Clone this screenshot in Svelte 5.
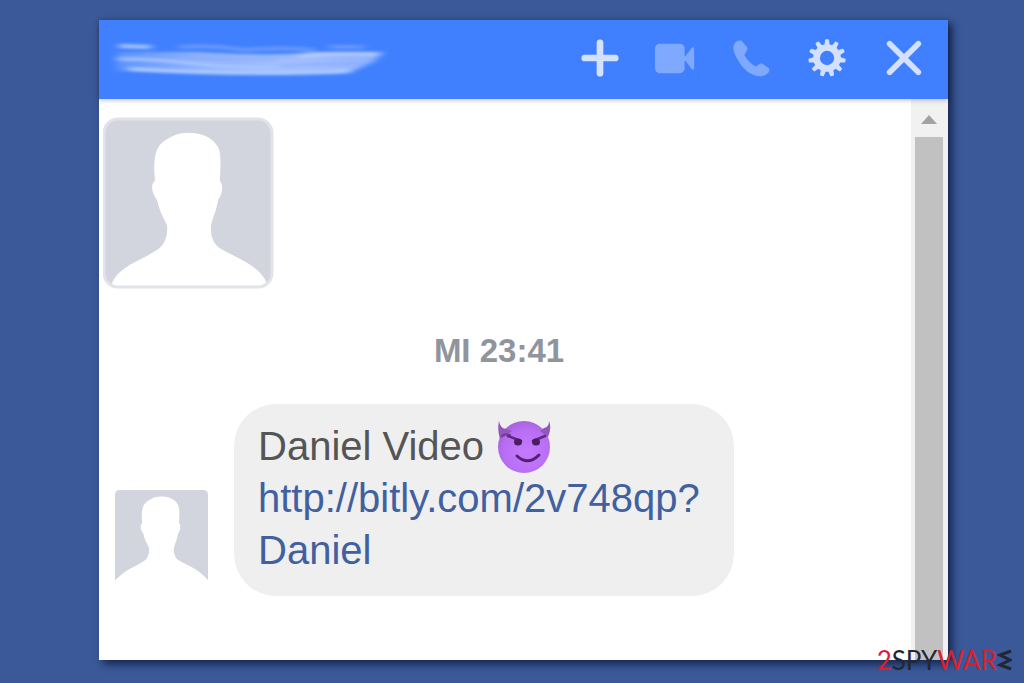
<script>
  const silhouette =
    'M8 170 C11 155 28 147 42 140 L54 133 C62 128 65 118 64 108 C59 99 56 92 54 83 C49 77 47 67 52 64 C51 56 51 46 52 40 C54 28 60 24 68 20 C80 13 106 14 115 30 C119 38 117 52 117 64 C121 69 119 78 115 83 C114 92 110 100 108 108 C107 118 110 127 118 132 C136 142 160 150 165 170 Z';
  const teeth = Array.from({ length: 11 }, (_, i) => (i * 360) / 11);
</script>

<svelte:head><title>Chat</title></svelte:head>

<main class="page">
  <section class="window" aria-label="Chat">
    <header class="bar">
      <svg class="name" viewBox="0 -2 284 44" preserveAspectRatio="none" aria-hidden="true">
        <defs>
          <filter id="smear" x="-5%" y="-20%" width="110%" height="140%">
            <feGaussianBlur stdDeviation="4 1.4" />
          </filter>
          <linearGradient id="stroke">
            <stop offset="0" stop-color="#8ab0ff" stop-opacity=".4" />
            <stop offset=".3" stop-color="#8db1ff" />
            <stop offset=".65" stop-color="#a3bfff" />
            <stop offset="1" stop-color="#8fb2ff" />
          </linearGradient>
        </defs>
        <g filter="url(#smear)" fill="none">
          <path d="M8 14 L90 14 Q170 19 205 14 L274 14 L264 24 L244 33 Q150 38 80 34 L8 33 Z" fill="url(#stroke)" />
          <path d="M10 8 L42 9" stroke="#a4c4ff" stroke-width="4" />
          <path d="M70 9 Q110 7 134 12 Q175 9 205 12 M220 9 H255" stroke="#6798ff" stroke-width="4" />
          <path d="M8 21 Q50 21 90 26 T170 29" stroke="#a9c6ff" stroke-width="3" />
          <path d="M20 31 Q90 35 150 35 T242 33" stroke="#accaff" stroke-width="4" />
          <path d="M170 21 Q215 14 270 16" stroke="#b9cdff" stroke-width="3" />
          <path d="M80 20 Q140 23 190 19 M170 28 Q220 25 256 26" stroke="#8aadfb" stroke-width="2" />
        </g>
      </svg>
      <nav class="tools" aria-label="Chat actions">
        <button aria-label="Add people">
          <svg viewBox="0 0 44 44"><path d="M22 6v32M6 22h32" stroke="#d3e1ff" stroke-width="7" stroke-linecap="round" /></svg>
        </button>
        <button aria-label="Video call">
          <svg viewBox="0 0 44 44" fill="#7ea9ff">
            <rect x="0" y="7" width="31" height="31" rx="5" />
            <path d="M32 20 L38 12 Q41 9 41 13 V32 Q41 36 38 33 L32 25 Z" />
            <path d="M30 20 H34 V25 H30 Z" />
          </svg>
        </button>
        <button aria-label="Voice call">
          <svg viewBox="0 0 44 44" fill="#7ea9ff">
            <path d="M3 8 C4 5 8 3 11 4 L17 11 C18 14 15 16 14 19 C17 24 21 28 26 31 C29 30 29 27 33 28 L40 33 C41 37 37 40 32 41 C23 42 14 35 9 27 C5 21 1 14 3 8 Z" />
          </svg>
        </button>
        <button aria-label="Settings">
          <svg viewBox="0 0 44 44">
            <circle cx="21" cy="22" r="11" fill="none" stroke="#d3e1ff" stroke-width="7" />
            {#each teeth as angle}
              <path d="M18.5 10 L19.5 3 H22.5 L23.5 10 Z" fill="#d3e1ff" stroke="#d3e1ff" stroke-linejoin="round" transform="rotate({angle} 21 22)" />
            {/each}
          </svg>
        </button>
        <button aria-label="Close">
          <svg viewBox="0 0 44 44"><path d="M7 7 L37 37 M37 7 L7 37" stroke="#d3e1ff" stroke-width="6" stroke-linecap="round" /></svg>
        </button>
      </nav>
    </header>

    <div class="body">
      <div class="thread">
        <svg class="portrait" viewBox="0 0 172 172" role="img" aria-label="Profile picture">
          <rect x="1" y="2" width="168" height="168" rx="14" fill="#d2d5dd" />
          <path d={silhouette} fill="#fff" />
          <rect x="1" y="2" width="168" height="168" rx="14" fill="none" stroke="#e2e3e9" stroke-width="3" />
        </svg>
        <time class="stamp">MI 23:41</time>
        <div class="message">
          <svg class="thumb" viewBox="4 4 164 164" preserveAspectRatio="none" role="img" aria-label="Daniel">
            <rect x="4" y="4" width="164" height="176" rx="8" fill="#d2d5dd" />
            <path d="M-2 180 C-2 166 24 150 42 140 L56 132 L116 131 C140 144 170 158 174 180 Z" fill="#fff" />
            <path d={silhouette} fill="#fff" />
          </svg>
          <p class="bubble">
            <span class="line">
              Daniel Video
              <svg class="emoji" viewBox="0 0 54 54" role="img" aria-label="Smiling face with horns">
                <defs>
                  <radialGradient id="face" cx=".55" cy=".6" r=".6">
                    <stop offset="0" stop-color="#c47bff" />
                    <stop offset=".7" stop-color="#b96ff5" />
                    <stop offset="1" stop-color="#a864dd" />
                  </radialGradient>
                </defs>
                <circle cx="26" cy="28" r="26" fill="url(#face)" />
                <path d="M1 2 Q2 9 8 10 L14 12 L7 17 L2 20 Q-1 10 1 2 Z M51 2 Q51 8 46 9 L42 12 L50 18 Q54 9 51 2 Z" fill="#9455bd" />
                <path d="M4 17 Q7 14 12 16" stroke="#763a9c" stroke-width="2" fill="none" stroke-linecap="round" />
                <path d="M10 17 L23 22 M47 17 L35 22" stroke="#5e2a80" stroke-width="2.5" fill="none" stroke-linecap="round" />
                <ellipse cx="20" cy="23" rx="4" ry="3.5" fill="#4b1b63" />
                <ellipse cx="38" cy="23" rx="4" ry="3.5" fill="#4b1b63" />
                <path d="M19 37 Q30 47 41 36" stroke="#55206f" stroke-width="3" fill="none" stroke-linecap="round" />
              </svg>
            </span>
            <a href="http://bitly.com/2v748qp?Daniel">http://bitly.com/2v748qp?<wbr />Daniel</a>
          </p>
        </div>
      </div>
      <div class="scroll" aria-hidden="true">
        <svg viewBox="0 0 16 9"><path d="M0 9 L8 0 L16 9 Z" fill="#a3a3a3" /></svg>
        <div class="grip"></div>
      </div>
    </div>
  </section>

  <div class="brand">
    <span class="red">2</span><span>SPY</span><span class="red">WAR</span><svg viewBox="0 0 15 22" role="img" aria-label="E"><path d="M14 2 L3 6 L13 11 L3 16 L14 20" fill="none" stroke="#222733" stroke-width="3" /></svg>
  </div>
</main>

<style>
  :global(body) {
    margin: 0;
    background: #3b5998;
  }
  .page {
    box-sizing: border-box;
    min-height: 100vh;
    padding: 20px 76px 23px 99px;
    display: flex;
    position: relative;
    background: #3b5998;
    font-family: "Liberation Sans", Arial, sans-serif;
  }
  .window {
    flex: 1;
    display: flex;
    flex-direction: column;
    background: #fff;
    box-shadow: 4px 4px 8px rgba(8, 18, 50, 0.75);
  }
  .bar {
    display: flex;
    align-items: flex-start;
    justify-content: space-between;
    padding: 0 6px 3px 10px;
    background: #4080ff;
    box-shadow: 0 1px 5px rgba(0, 0, 0, 0.25);
    z-index: 1;
  }
  .name {
    align-self: center;
    width: 284px;
    height: 44px;
  }
  .tools {
    display: flex;
  }
  button {
    display: flex;
    align-items: center;
    justify-content: center;
    width: 76px;
    height: 76px;
    padding: 0;
    border: 0;
    background: none;
    cursor: pointer;
  }
  button svg {
    width: 42px;
    height: 42px;
  }
  .body {
    flex: 1;
    display: flex;
  }
  .thread {
    flex: 1;
    display: flex;
    flex-direction: column;
    padding: 18px 16px 0 4px;
  }
  .portrait {
    width: 172px;
    height: 172px;
  }
  .stamp {
    align-self: center;
    margin-top: 43px;
    font-size: 33px;
    line-height: 38px;
    font-weight: bold;
    color: #90949c;
  }
  .message {
    display: flex;
    align-items: flex-end;
    gap: 26px;
    margin-top: 34px;
    padding-left: 12px;
  }
  .thumb {
    width: 93px;
    height: 91px;
    margin-bottom: 15px;
  }
  .bubble {
    box-sizing: border-box;
    max-width: 500px;
    margin: 0;
    padding: 16px 28px 20px 24px;
    border-radius: 42px;
    background: #efefef;
    color: #555;
    font-size: 40px;
    line-height: 52px;
  }
  .line {
    display: flex;
    align-items: center;
    gap: 14px;
    height: 52px;
  }
  .emoji {
    width: 54px;
    height: 54px;
  }
  a {
    color: #41609f;
    text-decoration: none;
  }
  .scroll {
    box-sizing: border-box;
    width: 37px;
    padding-right: 1px;
    display: flex;
    flex-direction: column;
    align-items: center;
    background: #f1f1f1;
  }
  .scroll svg {
    width: 16px;
    height: 9px;
    margin: 16px 0 13px;
  }
  .grip {
    flex: 1;
    width: 28px;
    background: #c1c1c1;
  }
  .brand {
    position: absolute;
    right: 12px;
    bottom: 8px;
    z-index: 2;
    display: flex;
    align-items: center;
    font-family: Lato, sans-serif;
    font-size: 26px;
    line-height: 30px;
    color: #222733;
  }
  .brand svg {
    width: 15px;
    height: 22px;
  }
  .red {
    color: #d8202f;
  }
</style>
